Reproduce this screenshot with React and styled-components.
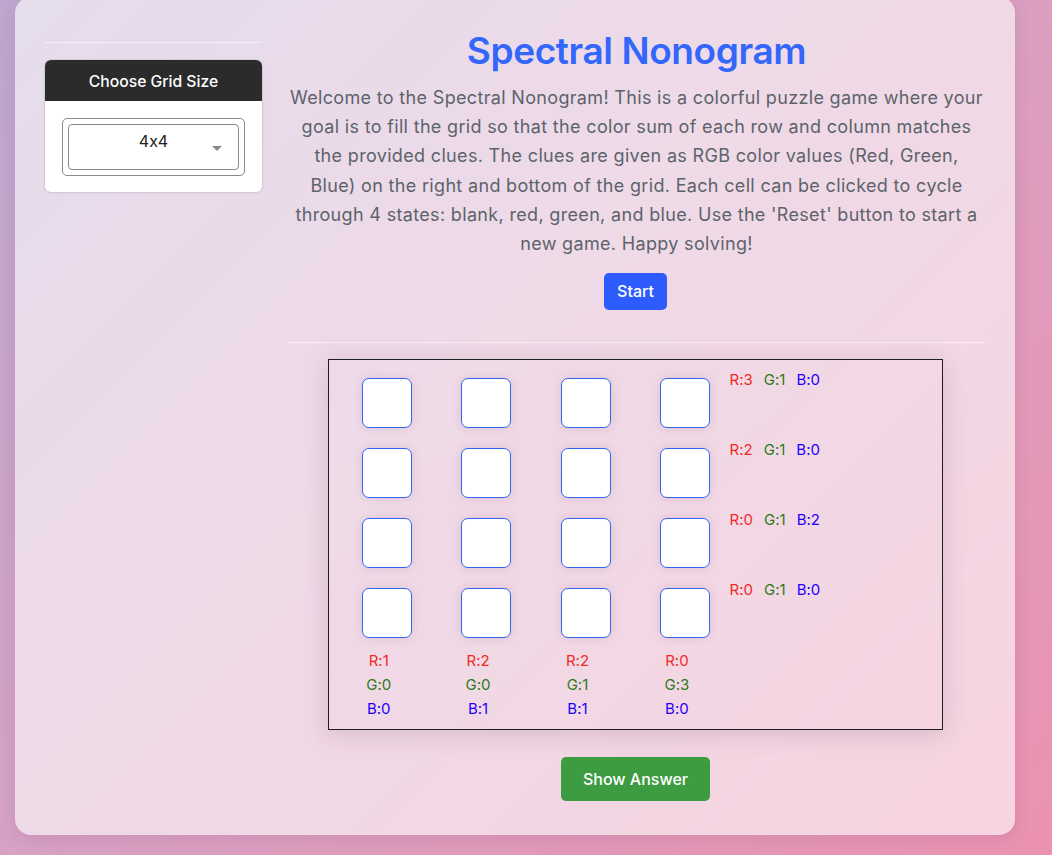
import React, { useState } from 'react';
import styled, { createGlobalStyle } from 'styled-components';

const GlobalStyle = createGlobalStyle`
  html, body {
    margin: 0;
    padding: 0;
  }
  body {
    min-height: 855px;
    overflow: hidden;
    font-family: Inter, "Liberation Sans", sans-serif;
    font-feature-settings: 'calt' 0;
    background: linear-gradient(135deg, #bda8d0 0%, #d7a2c4 45%, #ec92b1 100%);
  }
`;

const rowClues = [
  [3, 1, 0],
  [2, 1, 0],
  [0, 1, 2],
  [0, 1, 0],
];

const colClues = [
  [1, 0, 0],
  [2, 0, 1],
  [2, 1, 1],
  [0, 3, 0],
];

const clueColors = ['#f02a24', '#2a7a18', '#1e00ff'];
const clueLetters = ['R', 'G', 'B'];

const introLines = [
  'Welcome to the Spectral Nonogram! This is a colorful puzzle game where your',
  'goal is to fill the grid so that the color sum of each row and column matches',
  'the provided clues. The clues are given as RGB color values (Red, Green,',
  'Blue) on the right and bottom of the grid. Each cell can be clicked to cycle',
  "through 4 states: blank, red, green, and blue. Use the 'Reset' button to start a",
  'new game. Happy solving!',
];

const Page = styled.div`
  padding: 0 0 20px 15px;
`;

const Card = styled.div`
  width: 1000px;
  height: 838px;
  box-sizing: border-box;
  margin-top: -3px;
  padding: 31px 30px 0;
  display: flex;
  gap: 26px;
  border-radius: 16px;
  background: rgba(255, 255, 255, 0.6);
  box-shadow: 0 4px 18px rgba(90, 40, 80, 0.12);
`;

const Sidebar = styled.aside`
  width: 217px;
  flex-shrink: 0;
  padding-top: 14px;
`;

const Rule = styled.hr`
  margin: 0;
  border: 0;
  border-top: 1px solid rgba(255, 255, 255, 0.55);
`;

const Panel = styled.div`
  margin-top: 17px;
  border-radius: 6px;
  overflow: hidden;
  background: #fff;
  box-shadow: 0 0 0 1px rgba(0, 0, 0, 0.06), 0 1px 4px rgba(0, 0, 0, 0.06);
`;

const PanelHeader = styled.div`
  height: 41px;
  padding-top: 1px;
  box-sizing: border-box;
  display: flex;
  align-items: center;
  justify-content: center;
  background: #2b2b2b;
  color: #fff;
  font-size: 15.7px;
  font-weight: 500;
`;

const PanelBody = styled.div`
  padding: 17px 17px 16px;
`;

const SelectFrame = styled.div`
  border: 1px solid #8a8a8a;
  border-radius: 5px;
  padding: 5px;
`;

const SelectBox = styled.div`
  position: relative;
  height: 46px;
  box-sizing: border-box;
  border: 1px solid #8a8a8a;
  border-radius: 4px;
  padding-top: 6px;
  text-align: center;
  font-size: 16px;
  line-height: 20px;
  color: #222;

  &::after {
    content: '';
    position: absolute;
    right: 16px;
    top: 21px;
    border-left: 5px solid transparent;
    border-right: 5px solid transparent;
    border-top: 5px solid #8c8c8c;
  }
`;

const Main = styled.main`
  width: 697px;
  flex-shrink: 0;
  display: flex;
  flex-direction: column;
  align-items: center;
`;

const Title = styled.h1`
  margin: 0;
  font-size: 37px;
  line-height: 46px;
  font-weight: 600;
  color: #3366fb;
  letter-spacing: -0.4px;
`;

const Intro = styled.p`
  margin: 9px -4px 0;
  text-align: center;
  font-size: 18px;
  line-height: 29.2px;
  letter-spacing: 0.33px;
  color: #5d636b;
`;

const Button = styled.button`
  border: 0;
  border-radius: 5px;
  color: #fff;
  font-family: inherit;
  font-size: 16px;
  font-weight: 500;
  line-height: 24px;
  cursor: pointer;
  background: ${(p) => (p.$variant === 'success' ? '#3d9b42' : '#2e5bfd')};
  padding: ${(p) => (p.$variant === 'success' ? '10px 22px' : '6px 13px 7px')};
  margin: ${(p) => p.$top}px 2px 0 0;
`;

const WideRule = styled(Rule)`
  align-self: stretch;
  margin-top: 32px;
`;

const Board = styled.div`
  margin: 16px 2px 0 0;
  width: 615px;
  box-sizing: border-box;
  border: 1px solid #1e1e1e;
  padding: 11px 0 8px;
  display: grid;
  grid-template-columns: repeat(4, 99.4px) 1fr;
  grid-auto-rows: 70px;
  box-shadow: 0 4px 24px rgba(80, 40, 70, 0.16);
`;

const Cell = styled.button`
  justify-self: start;
  margin: 7px 0 0 33px;
  width: 50px;
  height: 50px;
  padding: 0;
  border: 1px solid #3364f2;
  border-radius: 7px;
  cursor: pointer;
  background: ${(p) => p.$fill};
  box-shadow: 0 0 9px rgba(90, 50, 90, 0.14);
`;

const RowClue = styled.div`
  padding-left: 3px;
  display: flex;
  gap: 11px;
  font-size: 15px;
  line-height: 18px;
`;

const ColClue = styled.div`
  margin-top: -2px;
  grid-row: 5;
  display: flex;
  flex-direction: column;
  align-items: center;
  font-size: 15px;
  line-height: 24px;
`;

const Clue = styled.span`
  color: ${(p) => p.$color};
`;

const states = ['#fff', '#ff4d4d', '#4caf50', '#4d6bff'];

const App = () => {
  const [grid, setGrid] = useState(Array(16).fill(0));

  const cycle = (i) =>
    setGrid((g) => g.map((v, j) => (j === i ? (v + 1) % 4 : v)));

  return (
    <Page>
      <GlobalStyle />
      <Card>
        <Sidebar>
          <Rule />
          <Panel>
            <PanelHeader>Choose Grid Size</PanelHeader>
            <PanelBody>
              <SelectFrame>
                <SelectBox>4x4</SelectBox>
              </SelectFrame>
            </PanelBody>
          </Panel>
        </Sidebar>
        <Main>
          <Title>Spectral Nonogram</Title>
          <Intro>
            {introLines.map((line, i) => (
              <React.Fragment key={i}>
                {i > 0 && <br />}
                {line}
              </React.Fragment>
            ))}
          </Intro>
          <Button $top={15}>Start</Button>
          <WideRule />
          <Board>
            {rowClues.map((clue, r) => (
              <React.Fragment key={r}>
                {[0, 1, 2, 3].map((c) => (
                  <Cell
                    key={c}
                    $fill={states[grid[r * 4 + c]]}
                    onClick={() => cycle(r * 4 + c)}
                  />
                ))}
                <RowClue>
                  {clue.map((v, k) => (
                    <Clue key={k} $color={clueColors[k]}>
                      {clueLetters[k]}:{v}
                    </Clue>
                  ))}
                </RowClue>
              </React.Fragment>
            ))}
            {colClues.map((clue, c) => (
              <ColClue key={c}>
                {clue.map((v, k) => (
                  <Clue key={k} $color={clueColors[k]}>
                    {clueLetters[k]}:{v}
                  </Clue>
                ))}
              </ColClue>
            ))}
          </Board>
          <Button $variant="success" $top={27}>
            Show Answer
          </Button>
        </Main>
      </Card>
    </Page>
  );
};

export default App;
